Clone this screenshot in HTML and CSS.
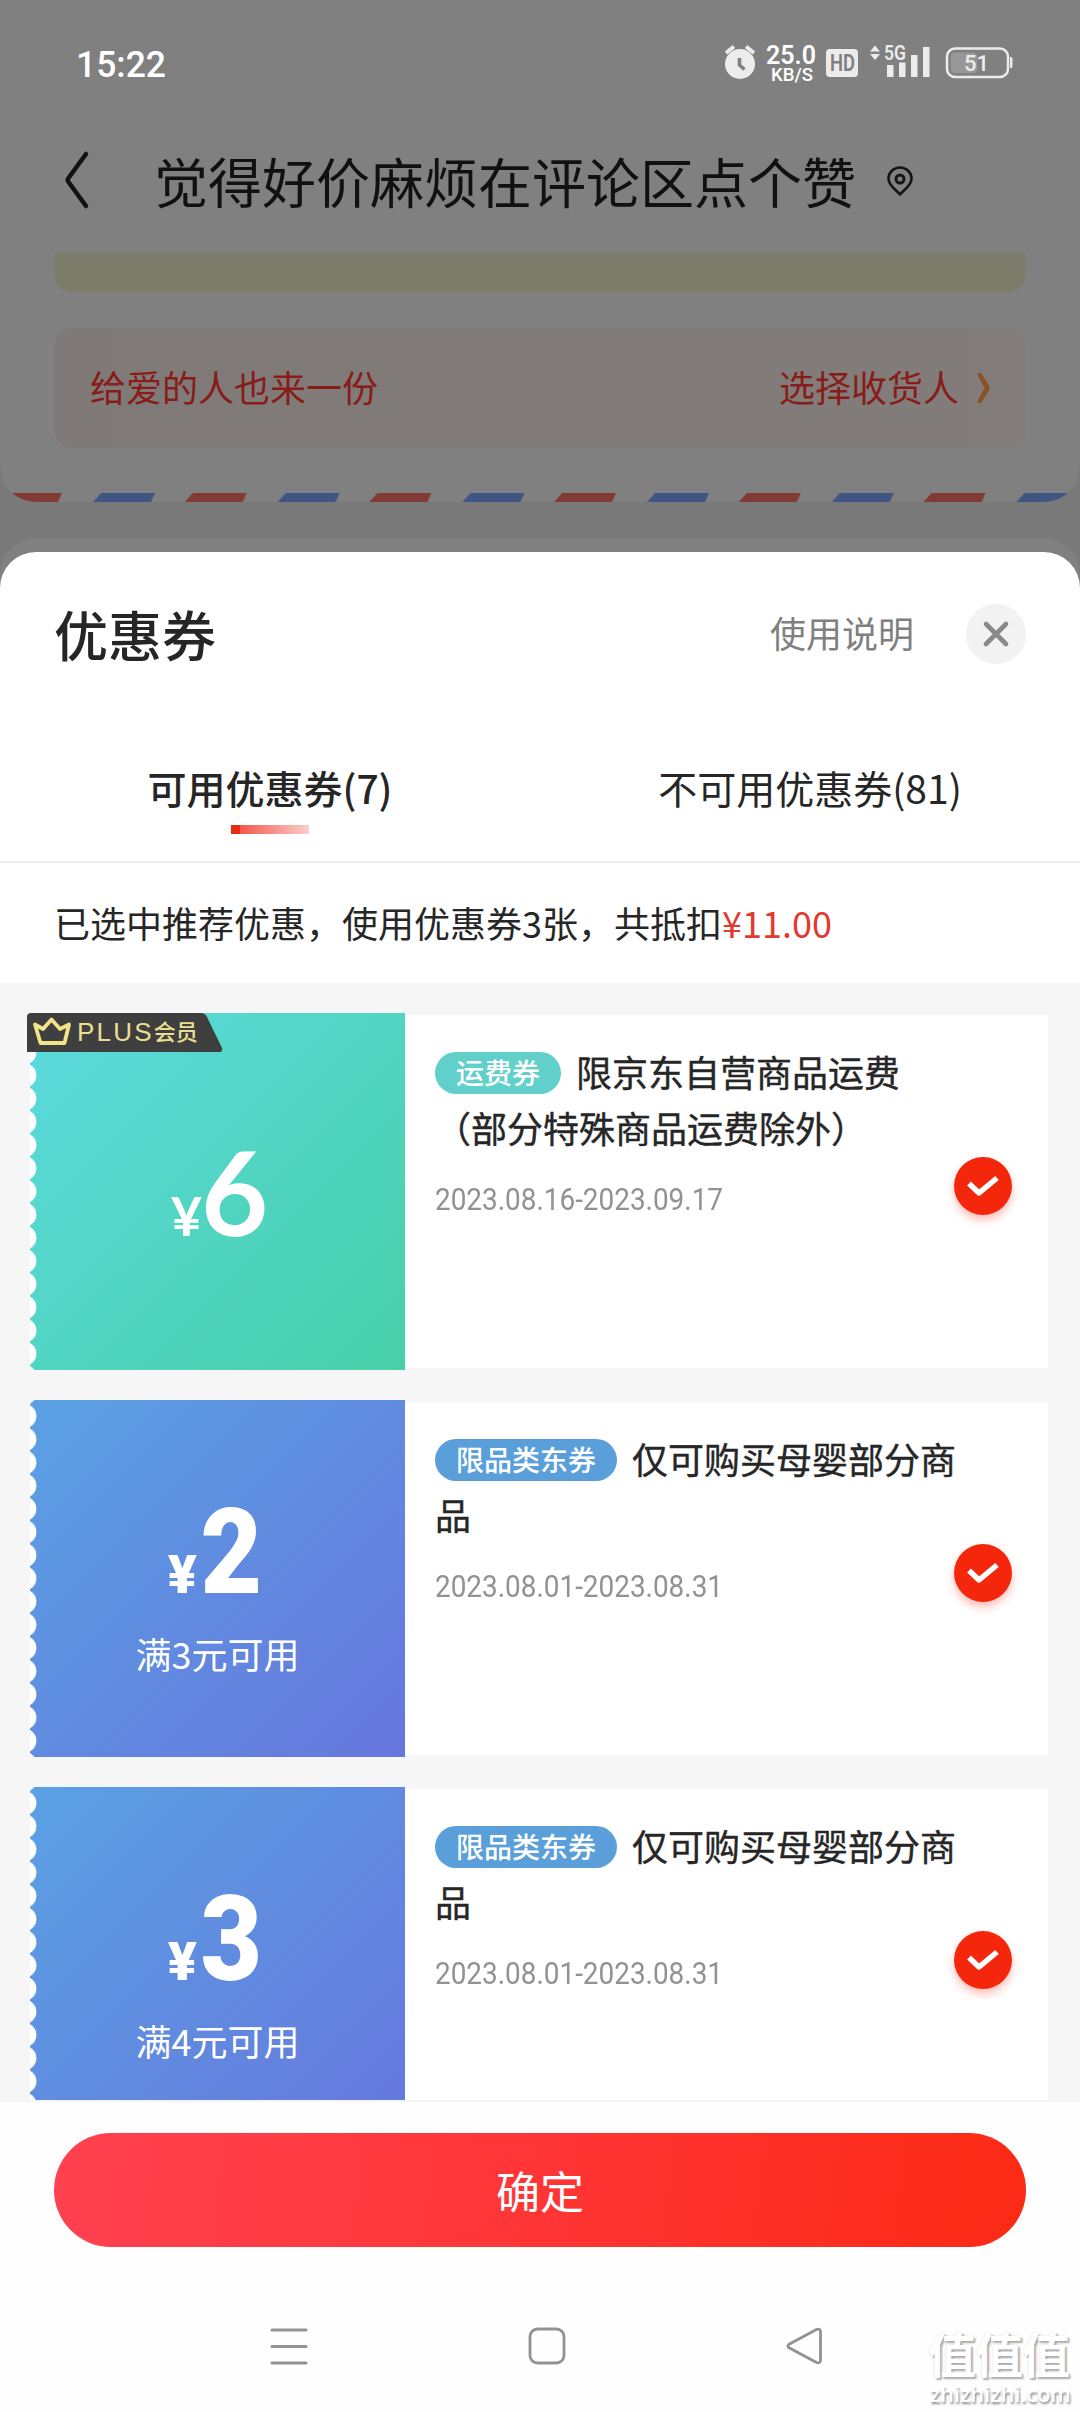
FILE: index.html
```html
<!DOCTYPE html>
<html lang="zh-CN">
<head>
<meta charset="utf-8">
<title>优惠券</title>
<link rel="stylesheet" href="styles.css">
</head>
<body>
<div class="screen">
  <section class="order">
    <div class="status">
      <svg class="status-time" width="120" height="50" viewBox="0 0 120 50"><text x="6" y="36.500" font-size="37" font-weight="500" textLength="90" lengthAdjust="spacingAndGlyphs" fill="#fff">15:22</text></svg>
      <svg class="status-icons" width="300" height="50" viewBox="720 40 300 50" fill="#ececec">
        <circle cx="740" cy="64" r="15"/>
        <path d="M726 53l8-6.500M746 46.500l8 6.500" stroke="#ececec" stroke-width="4" fill="none"/>
        <path d="M739.500 58v7l5 4.500" stroke="#808080" stroke-width="3.600" fill="none"/>
        <text x="766" y="63.500" font-size="25" font-weight="600" textLength="50" lengthAdjust="spacingAndGlyphs" fill="#fff">25.0</text>
        <text x="771" y="80.500" font-size="19" font-weight="500" textLength="42" lengthAdjust="spacingAndGlyphs" fill="#fff">KB/S</text>
        <rect x="826" y="49" width="32" height="28" rx="4"/>
        <text x="830" y="71" font-size="23" font-weight="600" textLength="25" lengthAdjust="spacingAndGlyphs" fill="#808080">HD</text>
        <path d="M870 51.500l5-6 5 6zM870 54l5 6 5-6z"/>
        <text x="884" y="60" font-size="20" font-weight="600" textLength="22" lengthAdjust="spacingAndGlyphs">5G</text>
        <path d="M887 65h6.500v12h-6.500zM899 62.500h6.500V77h-6.500zM911 55h6.500v22h-6.500zM923 47h6.500v30h-6.500z"/>
        <rect x="947" y="48.500" width="61" height="28.500" rx="8" fill="none" stroke="#ececec" stroke-width="2.500"/>
        <rect x="951" y="52.500" width="26" height="20.500" rx="4" fill="#989898"/>
        <path d="M1010 57h1q1.500 0 1.500 2v7q0 2-1.500 2h-1z"/>
        <text x="964" y="71" font-size="22" font-weight="500" textLength="25" lengthAdjust="spacingAndGlyphs">51</text>
      </svg>
    </div>
    <header class="nav">
      <svg class="back" width="26" height="60" viewBox="0 0 26 60"><path d="M22 4L4.500 28q-1.500 2 0 4L22 56" fill="none" stroke="#111" stroke-width="4.500" stroke-linecap="round" stroke-linejoin="round"/></svg>
      <h1 class="nav-title">觉得好价麻烦在评论区点个赞</h1>
      <svg class="pin" width="28" height="32" viewBox="0 0 28 32" fill="none" stroke="#151515"><path d="M14 29.500C11 25.500 2.500 21 2.500 13.500a11.500 11 0 0 1 23 0C25.500 21 17 25.500 14 29.500z" stroke-width="2.600" stroke-linejoin="round"/><circle cx="14" cy="14" r="4" stroke-width="3"/></svg>
    </header>
    <div class="notice"></div>
    <div class="gift">
      <span>给爱的人也来一份</span>
      <span class="gift-pick">选择收货人
        <svg width="14" height="30" viewBox="0 0 14 30"><path d="M1 0h4l8.500 13.500v3L5 30H1l2-5 5.500-10L3 5z" fill="#8a5220"/></svg>
      </span>
    </div>
    <svg class="airmail" width="1080" height="9" viewBox="0 0 1080 9">
      <defs>
        <pattern id="mail" x="0" y="0" width="184.700" height="9" patternUnits="userSpaceOnUse">
          <path d="M8 0H62l-4 9H0z" fill="#823a34"/>
          <path d="M101 0h54l-4 9H93z" fill="#3f5584"/>
        </pattern>
      </defs>
      <rect width="1080" height="9" fill="url(#mail)"/>
    </svg>
  </section>
  <div class="next-card"></div>

  <main class="sheet">
    <header class="sheet-head">
      <h2>优惠券</h2>
      <a class="help">使用说明</a>
      <span class="close"><svg width="28" height="28" viewBox="0 0 28 28"><path d="M4 4l20 20M24 4L4 24" stroke="#898989" stroke-width="4.600" stroke-linecap="round"/></svg></span>
    </header>
    <nav class="tabs">
      <span class="tab tab-on">可用优惠券(7)</span>
      <span class="tab">不可用优惠券(81)</span>
    </nav>
    <p class="summary">已选中推荐优惠，使用优惠券3张，共抵扣<em>¥11.00</em></p>

    <div class="list">
      <article class="coupon">
        <div class="face face-green">
          <div class="price price-thin"><small>¥</small><b>6</b></div>
          <div class="plus">
            <svg class="plus-bg" width="196" height="40" viewBox="0 0 196 40"><path d="M0 39V4q0-4 4-4h170q4 0 6 4l15 31q1 4-3 4z" fill="#3f3f3f"/></svg>
            <svg class="crown" width="40" height="30" viewBox="0 0 40 30"><path d="M3 8.500l8 4.500 8.500-9.500 8.500 9.500 9-4.500-4.500 18.500h-24z" fill="none" stroke="#f3e48c" stroke-width="3.800" stroke-linejoin="round"/></svg>
            <span class="plus-en">PLUS</span><span class="plus-cn">会员</span>
          </div>
        </div>
        <div class="info">
          <div class="text">
            <h3><span class="tag tag-green">运费券</span>限京东自营商品运费<br>（部分特殊商品运费除外）</h3>
            <time>2023.08.16-2023.09.17</time>
          </div>
          <span class="check"><svg width="34" height="24" viewBox="0 0 34 24"><path d="M3 9.500l10 9.500L31 4" fill="none" stroke="#fff" stroke-width="5.500" stroke-linejoin="round"/></svg></span>
        </div>
      </article>

      <article class="coupon">
        <div class="face face-blue">
          <div class="price"><small>¥</small><b>2</b></div>
          <p class="limit">满3元可用</p>
        </div>
        <div class="info">
          <div class="text">
            <h3><span class="tag tag-blue">限品类东券</span>仅可购买母婴部分商<br>品</h3>
            <time>2023.08.01-2023.08.31</time>
          </div>
          <span class="check"><svg width="34" height="24" viewBox="0 0 34 24"><path d="M3 9.500l10 9.500L31 4" fill="none" stroke="#fff" stroke-width="5.500" stroke-linejoin="round"/></svg></span>
        </div>
      </article>

      <article class="coupon">
        <div class="face face-blue">
          <div class="price"><small>¥</small><b>3</b></div>
          <p class="limit">满4元可用</p>
        </div>
        <div class="info">
          <div class="text">
            <h3><span class="tag tag-blue">限品类东券</span>仅可购买母婴部分商<br>品</h3>
            <time>2023.08.01-2023.08.31</time>
          </div>
          <span class="check"><svg width="34" height="24" viewBox="0 0 34 24"><path d="M3 9.500l10 9.500L31 4" fill="none" stroke="#fff" stroke-width="5.500" stroke-linejoin="round"/></svg></span>
        </div>
      </article>
    </div>

    <footer class="foot">
      <button class="confirm">确定</button>
      <div class="keys">
        <svg width="38" height="38" viewBox="0 0 38 38"><path d="M2 3h34M2 19.500h34M2 36h34" stroke="#929292" stroke-width="3" stroke-linecap="round"/></svg>
        <svg width="38" height="38" viewBox="0 0 38 38"><rect x="2" y="2" width="34" height="34" rx="7.500" fill="none" stroke="#929292" stroke-width="2.800"/></svg>
        <svg width="38" height="38" viewBox="0 0 38 38"><path d="M3 17.200q-2.200 1.800 0 3.600l27.500 14.700q4 1.500 4-2.500V5q0-4-4-2.500z" fill="none" stroke="#929292" stroke-width="2.800" stroke-linejoin="round"/></svg>
      </div>
    </footer>
  </main>
  <div class="watermark"><b>值值值</b><svg width="146" height="31" viewBox="0 0 146 31"><text x="2" y="22" font-size="22" font-weight="600" textLength="141" lengthAdjust="spacingAndGlyphs">zhizhizhi.com</text></svg></div>
</div>
</body>
</html>
```
FILE: styles.css
```css
* { box-sizing: border-box; margin: 0; padding: 0; }
body { font-family: "Noto Sans CJK SC", sans-serif; color: #262626; }
svg { display: block; flex: none; }
.screen { position: relative; width: 1080px; height: 2412px; background: #797979; overflow: hidden; display: flex; flex-direction: column; }

/* dimmed order page behind the sheet */
.order { height: 502px; background: #808080; border-radius: 0 0 36px 36px; overflow: hidden; display: flex; flex-direction: column; flex: none; }
.status { height: 128px; padding: 40px 60px 0 70px; display: flex; justify-content: space-between; flex: none; }
.status text { font-family: Roboto, sans-serif; }
.nav { height: 125px; display: flex; align-items: flex-start; padding-left: 64px; flex: none; }
.back { margin-top: 22px; }
.nav-title { margin-left: 64px; font-size: 54px; line-height: 80px; padding-top: 13px; font-weight: 400; color: #111; white-space: nowrap; }
.pin { margin: 37px 0 0 30px; }
.notice { height: 39px; margin: 0 54px; background: #7d7c6b; border-radius: 0 0 18px 18px; flex: none; }
.gift { height: 120px; margin: 36px 54px 45px; padding: 0 36px 5px; border-radius: 18px; background: linear-gradient(90deg, #7f7a78, #827d7a); display: flex; justify-content: space-between; align-items: center; font-size: 36px; font-weight: 400; color: #881c18; flex: none; }
.gift-pick { display: flex; align-items: center; gap: 17px; }
.gift-pick svg { margin-top: 5px; }
.next-card { height: 60px; margin-top: 36px; background: #808080; border-radius: 36px 36px 0 0; flex: none; }

/* coupon sheet */
.sheet { position: relative; margin-top: -46px; height: 1860px; background: #fff; border-radius: 36px 36px 0 0; display: flex; flex-direction: column; flex: none; }
.sheet-head { height: 163px; display: flex; align-items: center; padding: 0 54px; flex: none; }
.sheet-head h2 { font-size: 54px; font-weight: 500; margin-right: auto; padding-bottom: 1px; }
.help { font-size: 36px; font-weight: 400; color: #808080; margin-right: 52px; padding-bottom: 3px; }
.close { width: 60px; height: 60px; border-radius: 50%; background: #f2f2f2; display: flex; align-items: center; justify-content: center; }
.tabs { height: 148px; display: flex; border-bottom: 2px solid #eee; flex: none; }
.tab { flex: 1; text-align: center; font-size: 39px; line-height: 56px; padding-top: 44px; }
.tab-on { font-weight: 500; }
.tab-on::after { content: ""; display: block; width: 78px; height: 9px; margin: 10px auto 0; background: linear-gradient(90deg, #e62a14 0 9px, #f4574a 9px, #f9cfcc); }
.summary { height: 120px; padding-left: 54px; font-size: 36px; line-height: 118px; font-weight: 400; flex: none; }
.summary em { font-style: normal; color: #e23a30; }

.list { height: 1117px; background: #f6f6f6; padding: 30px 32px 0 30px; overflow: hidden; display: flex; flex-direction: column; gap: 30px; flex: none; }
.coupon { height: 357px; display: flex; flex: none; }
.face { position: relative; width: 375px; flex: none; border-radius: 5px 0 0 5px; display: flex; flex-direction: column; align-items: center; color: #fff; }
.face-green { background: radial-gradient(circle at -6.500px 50%, #fff 12.200px, transparent 12.800px) 0 4.500px / 6.500px 23.200px repeat-y, linear-gradient(135deg, #5cdade, #47d0a8); }
.face-blue { background: radial-gradient(circle at -6.500px 50%, #fff 12.200px, transparent 12.800px) 0 4.500px / 6.500px 23.200px repeat-y, linear-gradient(135deg, #5aa1e3, #6776dd); }
.price { display: flex; align-items: baseline; margin: 84px 6px 0 0; height: 138px; line-height: 138px; font-family: Roboto, sans-serif; }
.price small { font-size: 54px; font-weight: 900; }
.price b { font-size: 118px; font-weight: 900; margin: 0 -4px 0 0; transform: scaleX(.9); }
.price-thin { font-family: Lato, sans-serif; margin: 110px 0 0; }
.price-thin small { font-weight: 700; }
.price-thin b { font-size: 116px; font-weight: 700; margin-left: -1px; transform: none; }
.limit { font-size: 36px; line-height: 50px; margin-top: 6px; font-weight: 400; }
.plus { position: absolute; left: -3px; top: 0; width: 196px; height: 39px; display: flex; align-items: center; color: #eadf91; }
.plus-bg { position: absolute; left: 0; top: 0; }
.crown { position: relative; margin-left: 5px; top: -2px; }
.plus-en { position: relative; font: 400 26px/39px "Liberation Sans", sans-serif; letter-spacing: 2.200px; margin-left: 5px; }
.plus-cn { position: relative; font-size: 22px; font-weight: 500; line-height: 35px; top: -2px; }

.info { flex: 1; margin: 2px 0; background: #fff; display: flex; justify-content: space-between; padding: 28px 36px 0 30px; }
.text { width: 510px; }
.info h3 { font-size: 36px; font-weight: 400; -webkit-text-stroke: .4px; line-height: 56.300px; white-space: nowrap; }
.tag { display: inline-block; height: 42px; line-height: 40px; padding: 0 21px; margin-right: 15px; border-radius: 21px; color: #fff; font-size: 28px; font-weight: 500; -webkit-text-stroke: 0; vertical-align: middle; position: relative; top: -4px; }
.tag-green { background: #61d0ca; }
.tag-blue { background: #5a9fda; }
.info time { display: block; width: 312px; margin-top: 24px; font: 400 31px/40px Roboto, sans-serif; color: #929292; white-space: nowrap; transform: scaleX(.9); transform-origin: 0 0; }
.check { width: 58px; height: 58px; margin-top: 114px; border-radius: 50%; background: #f4270c; box-shadow: 0 5px 9px rgba(244, 39, 12, .3); display: flex; align-items: center; justify-content: center; flex: none; }

.foot { flex: 1; border-top: 2px solid #f4f4f4; padding: 31px 54px 0; background: #fefefe; }
.confirm { display: block; width: 972px; height: 114px; border: 0; border-radius: 57px; background: linear-gradient(97deg, #ff4150, #ff3434 52%, #fb2a14); color: #fff; font: 400 44px/112px "Noto Sans CJK SC", sans-serif; }
.keys { display: flex; gap: 220px; padding: 80px 0 0 216px; }

.watermark { position: absolute; left: 928px; top: 2324px; width: 146px; color: #fff; text-shadow: 2px 2px 2px #aaa, 0 0 2px #ddd; }
.watermark b { display: block; font-size: 48px; line-height: 56px; letter-spacing: -1px; }
.watermark text { font-family: "Open Sans", sans-serif; fill: #fff; text-shadow: none; }
.watermark svg { filter: drop-shadow(1px 2px 1px #888); }
```
